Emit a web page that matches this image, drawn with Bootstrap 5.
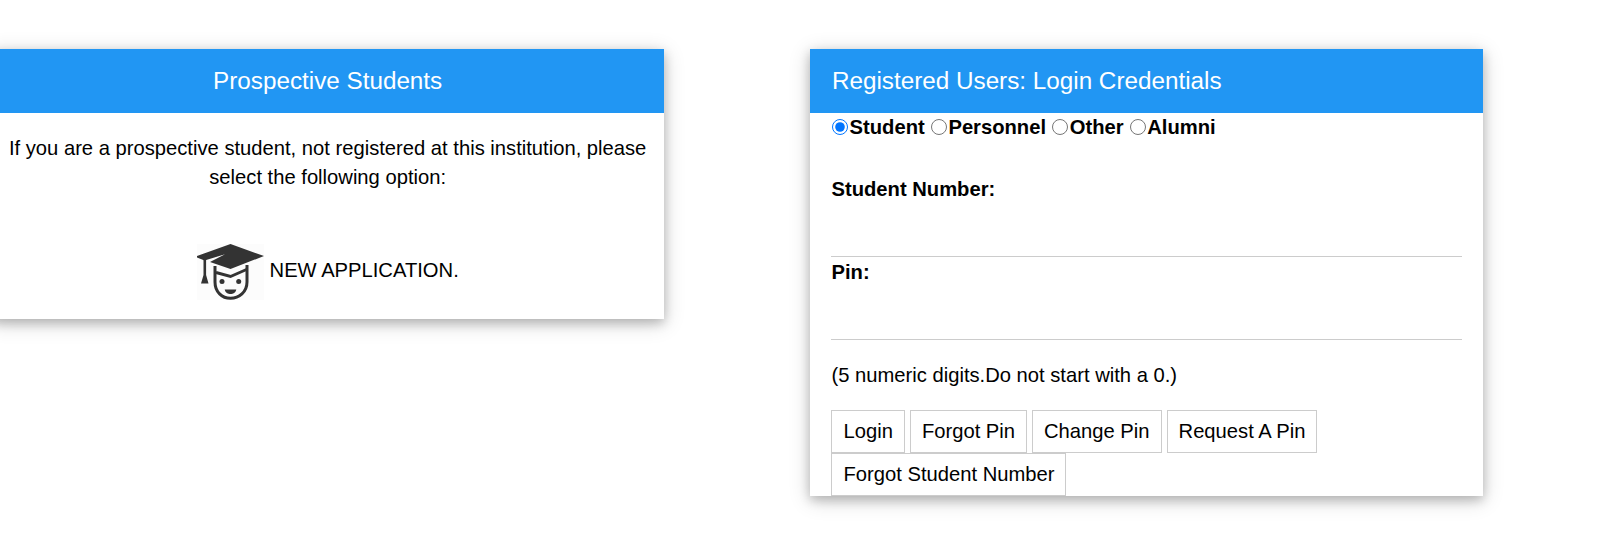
<!DOCTYPE html>
<html lang="en">
<head>
<meta charset="utf-8">
<title>Login</title>
<link href="https://cdn.jsdelivr.net/npm/bootstrap@5.3.0/dist/css/bootstrap.min.css" rel="stylesheet">
<style>
html,body{height:100%;overflow:hidden}
body{background:#fff;color:#000;font-family:"Liberation Sans",Arial,sans-serif;font-size:20.2px;line-height:30px}
.stage{margin-left:-9px;padding-top:49px;gap:145.7px}
.panel{width:673.3px;flex:none;background:#fff;box-shadow:0 4px 10px 0 rgba(0,0,0,.2),0 4px 20px 0 rgba(0,0,0,.19)}
.panel-head{height:64px;background:#2196f3;color:#fff;font-size:24.25px;line-height:64px}
.panel-head.left-head{padding-left:22px}
.intro{padding:21px 16px 0;line-height:29px;margin:0}
.apply{padding-top:52px;height:127px}
.apply svg{width:67px;height:56px;margin-right:6px;display:block;flex:none}
.apply-text{margin-top:11px}
.form-area{padding:0 21.5px}
.kinds{height:30px;line-height:29px;font-weight:700;white-space:nowrap}
.kinds input{margin:0 1.6px 0 .5px;width:16px;height:16px;vertical-align:-1px}
.field-label{display:block;font-weight:700;line-height:30px}
.first-field{margin-top:30.5px}
.line-field{display:block;width:100%;height:53.5px;border:0;border-bottom:1px solid #ccc;background:transparent;padding:0;outline:0}
.short-field{height:53px}
.hint{margin:20px 0 0;height:30px}
.actions{margin-top:20px;gap:0 5px;width:520px}
.plain-btn{height:43px;border:1px solid #ccc;border-radius:0;background:#fff;color:#000;font:20.2px/41px "Liberation Sans",Arial,sans-serif;padding:0 11px}
</style>
</head>
<body>
<main class="d-flex align-items-start stage">
  <section class="panel">
    <h2 class="panel-head text-center fw-normal m-0">Prospective Students</h2>
    <p class="intro text-center">If you are a prospective student, not registered at this institution, please select the following option:</p>
    <div class="apply d-flex justify-content-center align-items-start">
      <svg viewBox="0 0 67 56" role="img" aria-label="Graduate">
        <rect width="67" height="56" fill="#fcfcfc"/>
        <path fill="#333" d="M33.500 0 67 12 33.500 25 13 18 28 10.300 7.500 16.500 0 13.500V12Z"/>
        <path fill="#333" d="M6.500 15h2.600v16l2.400 8.500H4l2.500-8.500z"/>
        <path fill="none" stroke="#333" stroke-width="3" d="M18 22V38C18 48 25 54.300 33.500 54.300S50 48 50 38V21"/>
        <path fill="none" stroke="#333" stroke-width="3" d="M19 28.500 33.500 32.500 49.500 25.500"/>
        <circle cx="25" cy="37.500" r="2.500" fill="#333"/><circle cx="41.700" cy="37.500" r="2.500" fill="#333"/>
        <path fill="#333" d="M27.700 45.500H39.300C38.500 49 36 50 33.500 50S28.500 49 27.700 45.500Z"/>
      </svg>
      <span class="apply-text">NEW APPLICATION.</span>
    </div>
  </section>
  <section class="panel">
    <h2 class="panel-head left-head fw-normal m-0">Registered Users: Login Credentials</h2>
    <form class="form-area">
      <div class="kinds">
        <label><input type="radio" name="kind" checked>Student</label>
        <label><input type="radio" name="kind">Personnel</label>
        <label><input type="radio" name="kind">Other</label>
        <label><input type="radio" name="kind">Alumni</label>
      </div>
      <label class="field-label first-field" for="num">Student Number:</label>
      <input class="line-field" id="num" type="text">
      <label class="field-label" for="pin">Pin:</label>
      <input class="line-field short-field" id="pin" type="password">
      <p class="hint">(5 numeric digits.Do not start with a 0.)</p>
      <div class="actions d-flex flex-wrap">
        <button type="button" class="plain-btn">Login</button>
        <button type="button" class="plain-btn">Forgot Pin</button>
        <button type="button" class="plain-btn">Change Pin</button>
        <button type="button" class="plain-btn">Request A Pin</button>
        <button type="button" class="plain-btn">Forgot Student Number</button>
      </div>
    </form>
  </section>
</main>
<script src="https://cdn.jsdelivr.net/npm/bootstrap@5.3.0/dist/js/bootstrap.bundle.min.js"></script>
</body>
</html>
